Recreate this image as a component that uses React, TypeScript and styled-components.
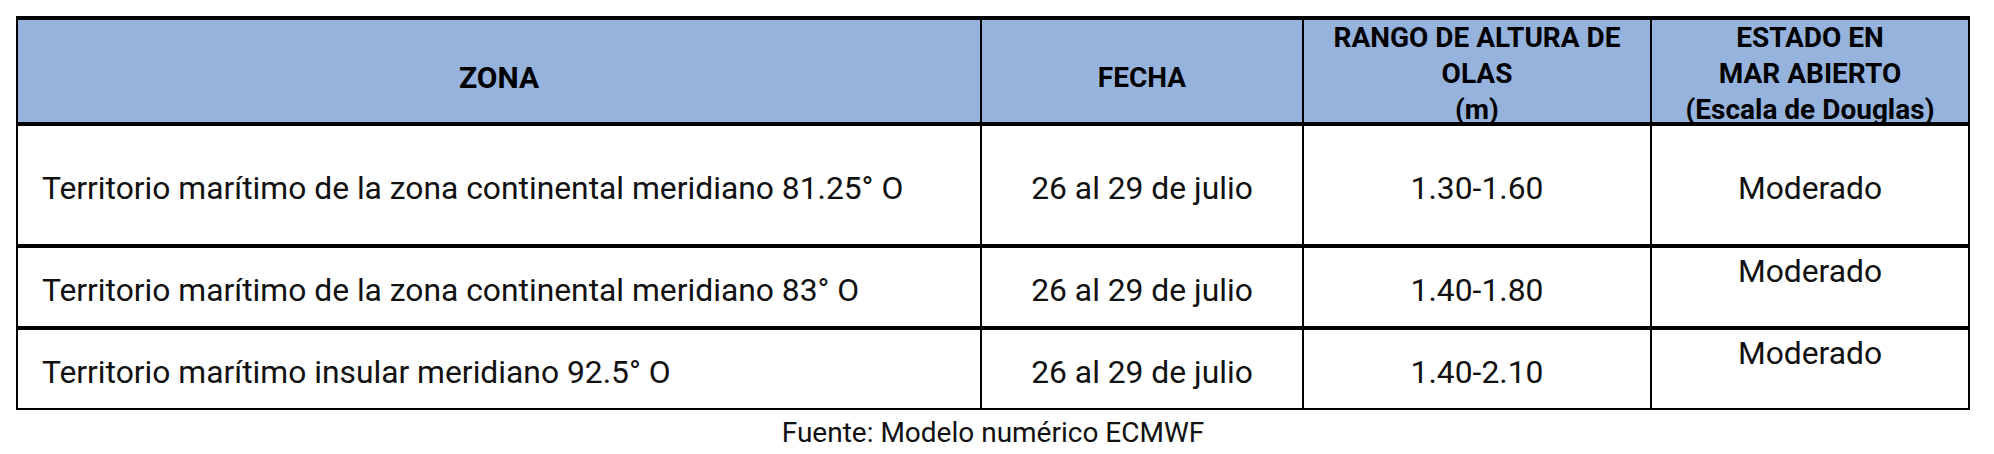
import React from "react"
import styled, { createGlobalStyle } from "styled-components"

const GlobalStyle = createGlobalStyle`
  html, body {
    margin: 0;
    padding: 0;
    background: #ffffff;
  }
  body {
    font-family: Roboto, "Liberation Sans", Arial, sans-serif;
    color: #000000;
  }
`

const Page = styled.div`
  width: 1954px;
  padding: 16px 0 0 16px;
`

const Table = styled.div`
  display: flex;
  flex-direction: column;
  border: 2px solid #000000;
  border-top-width: 4px;
`

const Row = styled.div<{ $height: number; $head?: boolean }>`
  display: grid;
  grid-template-columns: 962px 322px 348px 318px;
  height: ${p => p.$height}px;
  background: ${p => (p.$head ? "#95b3dd" : "#ffffff")};

  & + & {
    border-top: 4px solid #000000;
  }
`

const HeadCell = styled.div<{ $size?: number; $single?: boolean }>`
  display: flex;
  align-items: center;
  justify-content: center;
  text-align: center;
  font-weight: 700;
  font-size: ${p => p.$size ?? 28}px;
  line-height: 36px;
  padding-top: ${p => (p.$single ? 8 : 0)}px;
  box-sizing: border-box;
  overflow: visible;
  white-space: nowrap;

  & + & {
    border-left: 2px solid #000000;
  }
`

const Cell = styled.div<{ $left?: boolean; $top?: boolean }>`
  display: flex;
  align-items: ${p => (p.$top ? "flex-start" : "center")};
  justify-content: ${p => (p.$left ? "flex-start" : "center")};
  padding: ${p => (p.$top ? "4px 0 0" : "5px 0 0")};
  padding-left: ${p => (p.$left ? 24 : 0)}px;
  font-size: 31.8px;
  font-weight: 400;
  color: #111111;
  box-sizing: border-box;
  white-space: nowrap;

  & + & {
    border-left: 2px solid #000000;
  }
`

const Caption = styled.p`
  margin: 6px 0 0;
  text-align: center;
  font-size: 28px;
  color: #111111;
`

const rows = [
  {
    zona: "Territorio marítimo de la zona continental meridiano 81.25° O",
    fecha: "26 al 29 de julio",
    rango: "1.30-1.60",
    estado: "Moderado",
    height: 118,
    top: false,
  },
  {
    zona: "Territorio marítimo de la zona continental meridiano 83° O",
    fecha: "26 al 29 de julio",
    rango: "1.40-1.80",
    estado: "Moderado",
    height: 78,
    top: true,
  },
  {
    zona: "Territorio marítimo insular meridiano 92.5° O",
    fecha: "26 al 29 de julio",
    rango: "1.40-2.10",
    estado: "Moderado",
    height: 78,
    top: true,
  },
]

export default function App() {
  return (
    <Page>
      <GlobalStyle />
      <Table>
        <Row $height={102} $head>
          <HeadCell $size={30} $single>
            ZONA
          </HeadCell>
          <HeadCell $single>FECHA</HeadCell>
          <HeadCell>
            RANGO DE ALTURA DE
            <br />
            OLAS
            <br />
            (m)
          </HeadCell>
          <HeadCell>
            ESTADO EN
            <br />
            MAR ABIERTO
            <br />
            (Escala de Douglas)
          </HeadCell>
        </Row>
        {rows.map(r => (
          <Row key={r.zona} $height={r.height}>
            <Cell $left>{r.zona}</Cell>
            <Cell>{r.fecha}</Cell>
            <Cell>{r.rango}</Cell>
            <Cell $top={r.top}>{r.estado}</Cell>
          </Row>
        ))}
      </Table>
      <Caption>Fuente: Modelo numérico ECMWF</Caption>
    </Page>
  )
}
